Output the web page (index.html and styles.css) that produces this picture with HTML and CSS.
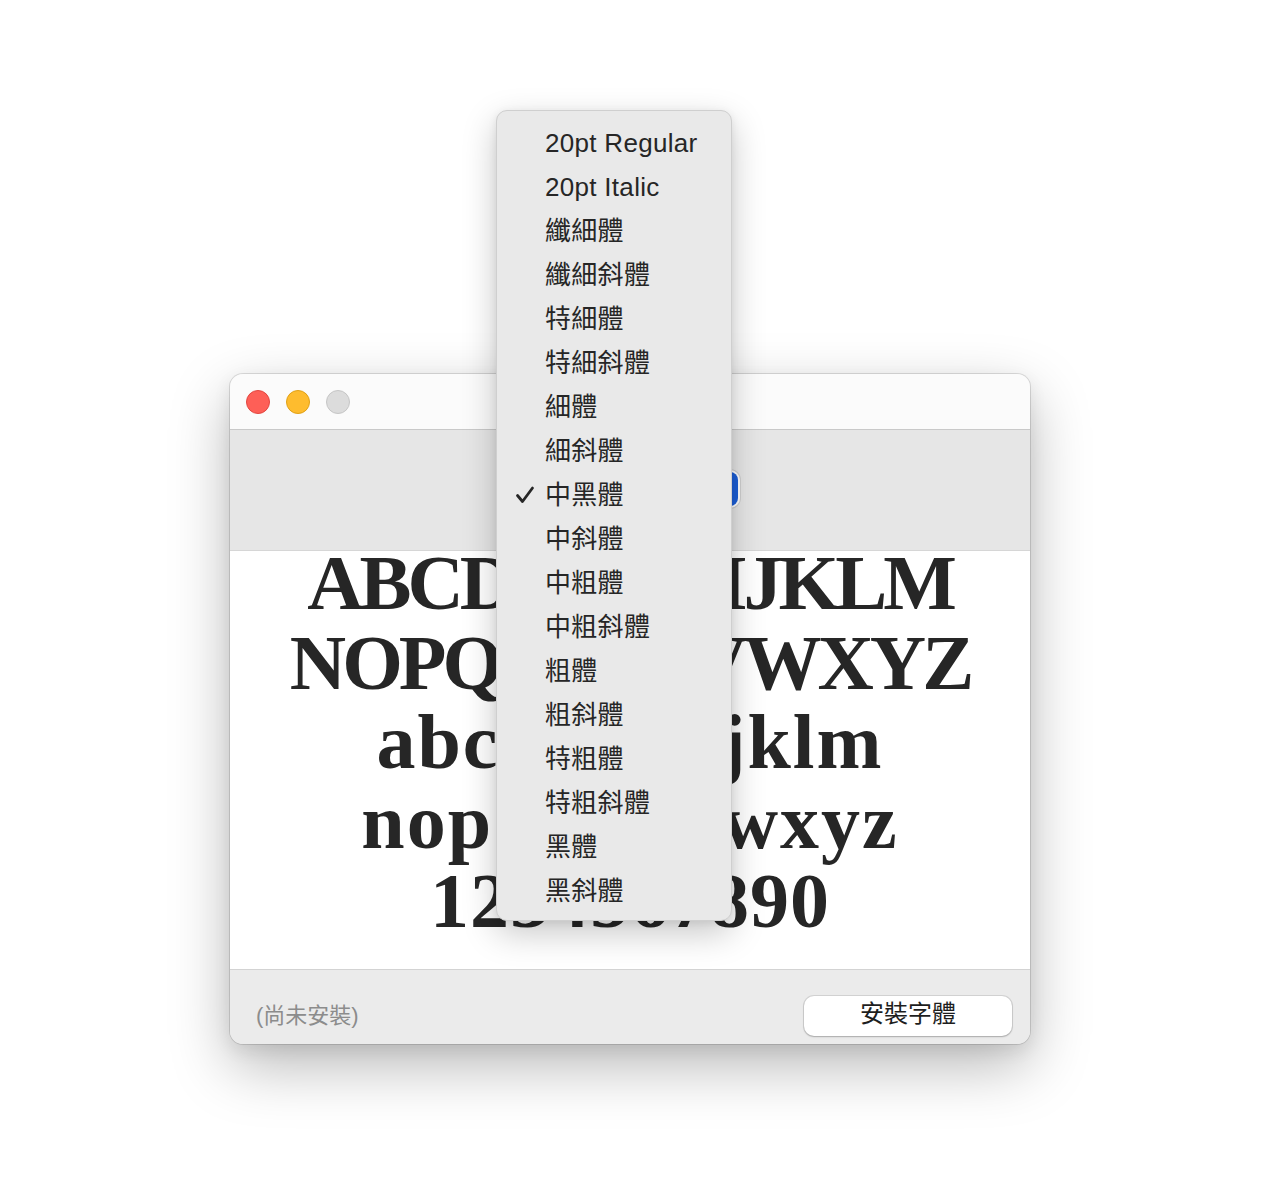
FILE: index.html
```html
<!DOCTYPE html>
<html lang="zh-Hant">
<head>
<meta charset="utf-8">
<title>字體預覽</title>
<link rel="stylesheet" href="styles.css">
</head>
<body>
<div class="stage">
  <div class="window">
    <div class="titlebar">
      <span class="light red"></span>
      <span class="light yellow"></span>
      <span class="light gray"></span>
    </div>
    <div class="toolbar">
      <div class="popup"><span class="popup-arrow"></span></div>
    </div>
    <div class="content">
      <div class="sample">
        <div class="ln caps">ABCDEFGHIJKLM</div>
        <div class="ln caps">NOPQRSTUVWXYZ</div>
        <div class="ln lower">abcdefghijklm</div>
        <div class="ln lower">nopqrstuvwxyz</div>
        <div class="ln digits">1234567890</div>
      </div>
    </div>
    <div class="bottombar">
      <span class="status">(尚未安裝)</span>
      <button class="install">安裝字體</button>
    </div>
  </div>
</div>

<div class="menu">
  <div class="item">20pt Regular</div>
  <div class="item">20pt Italic</div>
  <div class="item">纖細體</div>
  <div class="item">纖細斜體</div>
  <div class="item">特細體</div>
  <div class="item">特細斜體</div>
  <div class="item">細體</div>
  <div class="item">細斜體</div>
  <div class="item checked"><svg class="check" viewBox="0 0 20 18" width="20" height="18"><path d="M2.5 9.5 L7.5 15.5 L17.5 2" fill="none" stroke="#262626" stroke-width="2.8" stroke-linecap="round" stroke-linejoin="round"/></svg>中黑體</div>
  <div class="item">中斜體</div>
  <div class="item">中粗體</div>
  <div class="item">中粗斜體</div>
  <div class="item">粗體</div>
  <div class="item">粗斜體</div>
  <div class="item">特粗體</div>
  <div class="item">特粗斜體</div>
  <div class="item">黑體</div>
  <div class="item">黑斜體</div>
</div>
</body>
</html>
```

FILE: styles.css
```css
html, body {
  margin: 0;
  padding: 0;
  background: #ffffff;
}

body {
  width: 1280px;
  height: 1200px;
  position: relative;
  overflow: hidden;
  font-family: "Liberation Sans", "Noto Sans CJK TC", sans-serif;
}

.stage {
  padding-top: 374px;
  padding-left: 230px;
}

.window {
  width: 800px;
  height: 670px;
  border-radius: 13px;
  overflow: hidden;
  background: #ebebeb;
  box-shadow: 0 0 0 1px rgba(0, 0, 0, 0.12), 0 22px 60px rgba(0, 0, 0, 0.28), 0 6px 18px rgba(0, 0, 0, 0.08);
  display: flex;
  flex-direction: column;
}

.titlebar {
  height: 56px;
  flex: none;
  background: #fbfbfb;
  border-bottom: 1px solid #c9c9c9;
  display: flex;
  align-items: center;
  gap: 16px;
  padding-left: 16px;
  box-sizing: border-box;
}

.light {
  width: 24px;
  height: 24px;
  border-radius: 50%;
  box-sizing: border-box;
}

.light.red { background: #fe5f57; border: 1px solid #e2463f; }
.light.yellow { background: #febc2e; border: 1px solid #e1a116; }
.light.gray { background: #dcdcdc; border: 1px solid #c6c6c6; }

.toolbar {
  height: 121px;
  flex: none;
  background: #e6e6e6;
  border-bottom: 1px solid #d6d6d6;
  box-sizing: border-box;
  display: flex;
  align-items: center;
  justify-content: center;
}

.popup {
  width: 220px;
  height: 38px;
  margin-top: -2px;
  border-radius: 10px;
  background: #ffffff;
  box-shadow: 0 0 0 1px #cfcfcf;
  display: flex;
  justify-content: flex-end;
  overflow: hidden;
}

.popup-arrow {
  width: 34px;
  height: 34px;
  margin: 2px;
  border-radius: 8px;
  background: #1c5fd8;
}

.content {
  height: 419px;
  flex: none;
  background: #ffffff;
  border-bottom: 1px solid #d3d3d3;
  box-sizing: border-box;
}

.sample {
  margin-top: -8px;
  text-align: center;
  font-family: "Liberation Serif", "DejaVu Serif", serif;
  font-weight: bold;
  font-size: 78px;
  line-height: 79.5px;
  color: #262626;
}

.ln.caps { letter-spacing: -4px; }
.ln.lower { letter-spacing: 2px; }
.ln.digits { letter-spacing: 1px; }

.bottombar {
  flex: 1;
  background: #ebebeb;
  display: flex;
  align-items: flex-end;
  justify-content: space-between;
  padding: 0 18px 8px 26px;
}

.status {
  height: 40px;
  line-height: 40px;
  font-size: 22px;
  color: #8c8c8c;
}

.install {
  width: 208px;
  height: 40px;
  border: none;
  border-radius: 10px;
  background: #ffffff;
  box-shadow: 0 0 0 1px rgba(0, 0, 0, 0.1), 0 1px 2px rgba(0, 0, 0, 0.2);
  font-family: "Liberation Sans", "Noto Sans CJK TC", sans-serif;
  font-size: 24px;
  line-height: 36px;
  color: #1e1e1e;
  padding: 0 0 4px 0;
}

.menu {
  position: absolute;
  left: 496px;
  top: 110px;
  width: 236px;
  height: 811px;
  box-sizing: border-box;
  padding: 10px 0 9px 0;
  background: #e9e9e9;
  border: 1px solid #cfcfcf;
  border-radius: 11px;
  box-shadow: 0 12px 34px rgba(0, 0, 0, 0.22), 0 2px 8px rgba(0, 0, 0, 0.08);
}

.item {
  position: relative;
  height: 44px;
  line-height: 44px;
  padding-left: 48px;
  font-size: 26px;
  letter-spacing: 0.3px;
  color: #262626;
  white-space: nowrap;
}

.check {
  position: absolute;
  left: 18px;
  top: 13px;
}
```
